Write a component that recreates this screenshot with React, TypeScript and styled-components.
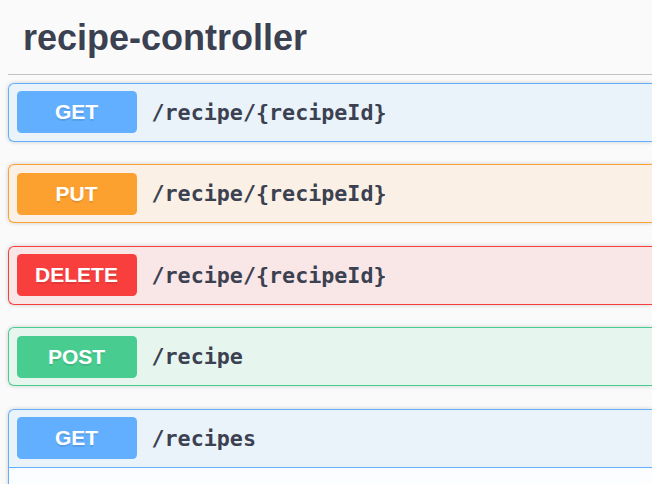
import React from "react";
import styled, { createGlobalStyle } from "styled-components";

type Method = "get" | "put" | "delete" | "post";

const colors: Record<Method, string> = {
  get: "97, 175, 254",
  put: "252, 161, 48",
  delete: "249, 62, 62",
  post: "73, 204, 144",
};

const GlobalStyle = createGlobalStyle`
  html, body {
    margin: 0;
    padding: 0;
    background: #fafafa;
    overflow: hidden;
  }
  body {
    font-family: "Liberation Sans", Arial, sans-serif;
    color: #3b4151;
  }
`;

// the section is cut by the right edge of the window, so blocks run flush to it
const Page = styled.div`
  width: 100%;
  height: 484px;
  padding: 2px 0 0 8px;
  box-sizing: border-box;
  overflow: hidden;
`;

const TagTitle = styled.h3`
  margin: 0 0 7.5px;
  padding: 15px 30px 15px 15px;
  font-size: 36px;
  font-weight: 700;
  line-height: normal;
  color: #3b4151;
  border-bottom: 1px solid rgba(59, 65, 81, 0.3);
`;

const OpBlock = styled.div<{ $method: Method }>`
  margin: 0 0 22.5px;
  border: 1px solid rgb(${(p) => colors[p.$method]});
  border-right: 0;
  border-radius: 6px 0 0 6px;
  background: rgba(${(p) => colors[p.$method]}, 0.1);
  box-shadow: 0 0 4.5px rgba(0, 0, 0, 0.19);
  overflow: hidden;
`;

const Summary = styled.div<{ $method: Method; $open?: boolean }>`
  display: flex;
  align-items: center;
  padding: 7.5px;
  border-bottom: ${(p) =>
    p.$open ? `1px solid rgb(${colors[p.$method]})` : "none"};
`;

const MethodBadge = styled.span<{ $method: Method }>`
  flex: 0 0 auto;
  width: 120px;
  padding: 9px 0;
  border-radius: 4.5px;
  background: rgb(${(p) => colors[p.$method]});
  color: #fff;
  font-family: "Liberation Sans", Arial, sans-serif;
  font-size: 21px;
  font-weight: 700;
  line-height: 24px;
  text-align: center;
  text-shadow: 0 1.5px 0 rgba(0, 0, 0, 0.1);
`;

const Path = styled.span`
  padding: 0 15px;
  font-family: "DejaVu Sans Mono", "Liberation Mono", monospace;
  font-size: 21.7px;
  font-weight: 700;
  color: #3b4151;
`;

const Body = styled.div`
  height: 60px;
  background: rgba(255, 255, 255, 0.8);
`;

const ops: { method: Method; path: string; open?: boolean }[] = [
  { method: "get", path: "/recipe/{recipeId}" },
  { method: "put", path: "/recipe/{recipeId}" },
  { method: "delete", path: "/recipe/{recipeId}" },
  { method: "post", path: "/recipe" },
  { method: "get", path: "/recipes", open: true },
];

export default function App() {
  return (
    <>
      <GlobalStyle />
      <Page>
        <TagTitle>recipe-controller</TagTitle>
        {ops.map((op, i) => (
          <OpBlock key={i} $method={op.method}>
            <Summary $method={op.method} $open={op.open}>
              <MethodBadge $method={op.method}>
                {op.method.toUpperCase()}
              </MethodBadge>
              <Path>{op.path}</Path>
            </Summary>
            {op.open && <Body />}
          </OpBlock>
        ))}
      </Page>
    </>
  );
}
